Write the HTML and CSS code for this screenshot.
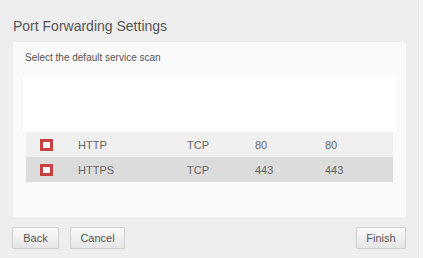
FILE: index.html
```html
<html>
<head>
    <title>Port Forwarding Settings</title>
<link rel="stylesheet" href="styles.css">
</head>
<body>
<div id="page">
    <h1>Port Forwarding Settings</h1>

    <div class="panel">
        <p class="intro">Select the default service scan</p>
        <div class="blank"></div>

        <table class="services">
            <tr class="odd">
                <td class="check"><span class="box"></span></td>
                <td class="name">HTTP</td>
                <td class="proto">TCP</td>
                <td class="port">80</td>
                <td>80</td>
            </tr>
            <tr class="even">
                <td class="check"><span class="box"></span></td>
                <td class="name">HTTPS</td>
                <td class="proto">TCP</td>
                <td class="port">443</td>
                <td>443</td>
            </tr>
        </table>
    </div>

    <div class="buttons">
        <button class="btn back">Back</button>
        <button class="btn cancel">Cancel</button>
        <span class="spacer"></span>
        <button class="btn finish">Finish</button>
    </div>
</div>
</body>
</html>
```

FILE: styles.css
```css
html {
    background: #f6f6f6;
}
body {
    margin: 0;
    font-family: "Liberation Sans", Arial, sans-serif;
}
#page {
    width: 419px;
    height: 258px;
    background: #eeeeee;
    border-right: 1px solid #e4e4e4;
    box-sizing: border-box;
}
h1 {
    margin: 0 0 8px 0;
    padding: 18px 0 0 13px;
    font-size: 14px;
    line-height: 16px;
    font-weight: normal;
    color: #555;
}
.panel {
    margin: 0 12px 0 13px;
    height: 175px;
    background: #fafafa;
    padding-top: 10px;
    box-sizing: border-box;
}
.intro {
    margin: 0 0 11px 12px;
    font-size: 10px;
    line-height: 12px;
    color: #555;
}
.blank {
    margin: 0 10px;
    height: 57px;
    background: #fff;
}
.services {
    margin: 0 13px;
    width: 367px;
    border-collapse: collapse;
    table-layout: fixed;
    font-size: 11px;
    color: #666;
}
.services td {
    height: 25px;
    padding: 0;
}
.services tr.odd {
    background: #f0f0f0;
}
.services tr.even {
    background: #dcdcdc;
}
.services .check {
    width: 52px;
}
.services .name {
    width: 109px;
}
.services .proto {
    width: 68px;
}
.services .port {
    width: 70px;
}
.box {
    display: block;
    margin-left: 14px;
    width: 7px;
    height: 6px;
    border: 3px solid #c8403f;
    background: #fff;
}
.buttons {
    display: flex;
    margin-top: 10px;
    padding: 0 12px 0 12px;
}
.spacer {
    flex: 1;
}
.btn {
    height: 22px;
    padding: 0;
    border: 1px solid #cfcfcf;
    border-radius: 1px;
    background: linear-gradient(#fbfbfb, #e5e5e5);
    font-family: "Liberation Sans", Arial, sans-serif;
    font-size: 11px;
    color: #555;
}
.back {
    width: 47px;
}
.cancel {
    width: 55px;
    margin-left: 11px;
}
.finish {
    width: 50px;
}
```
